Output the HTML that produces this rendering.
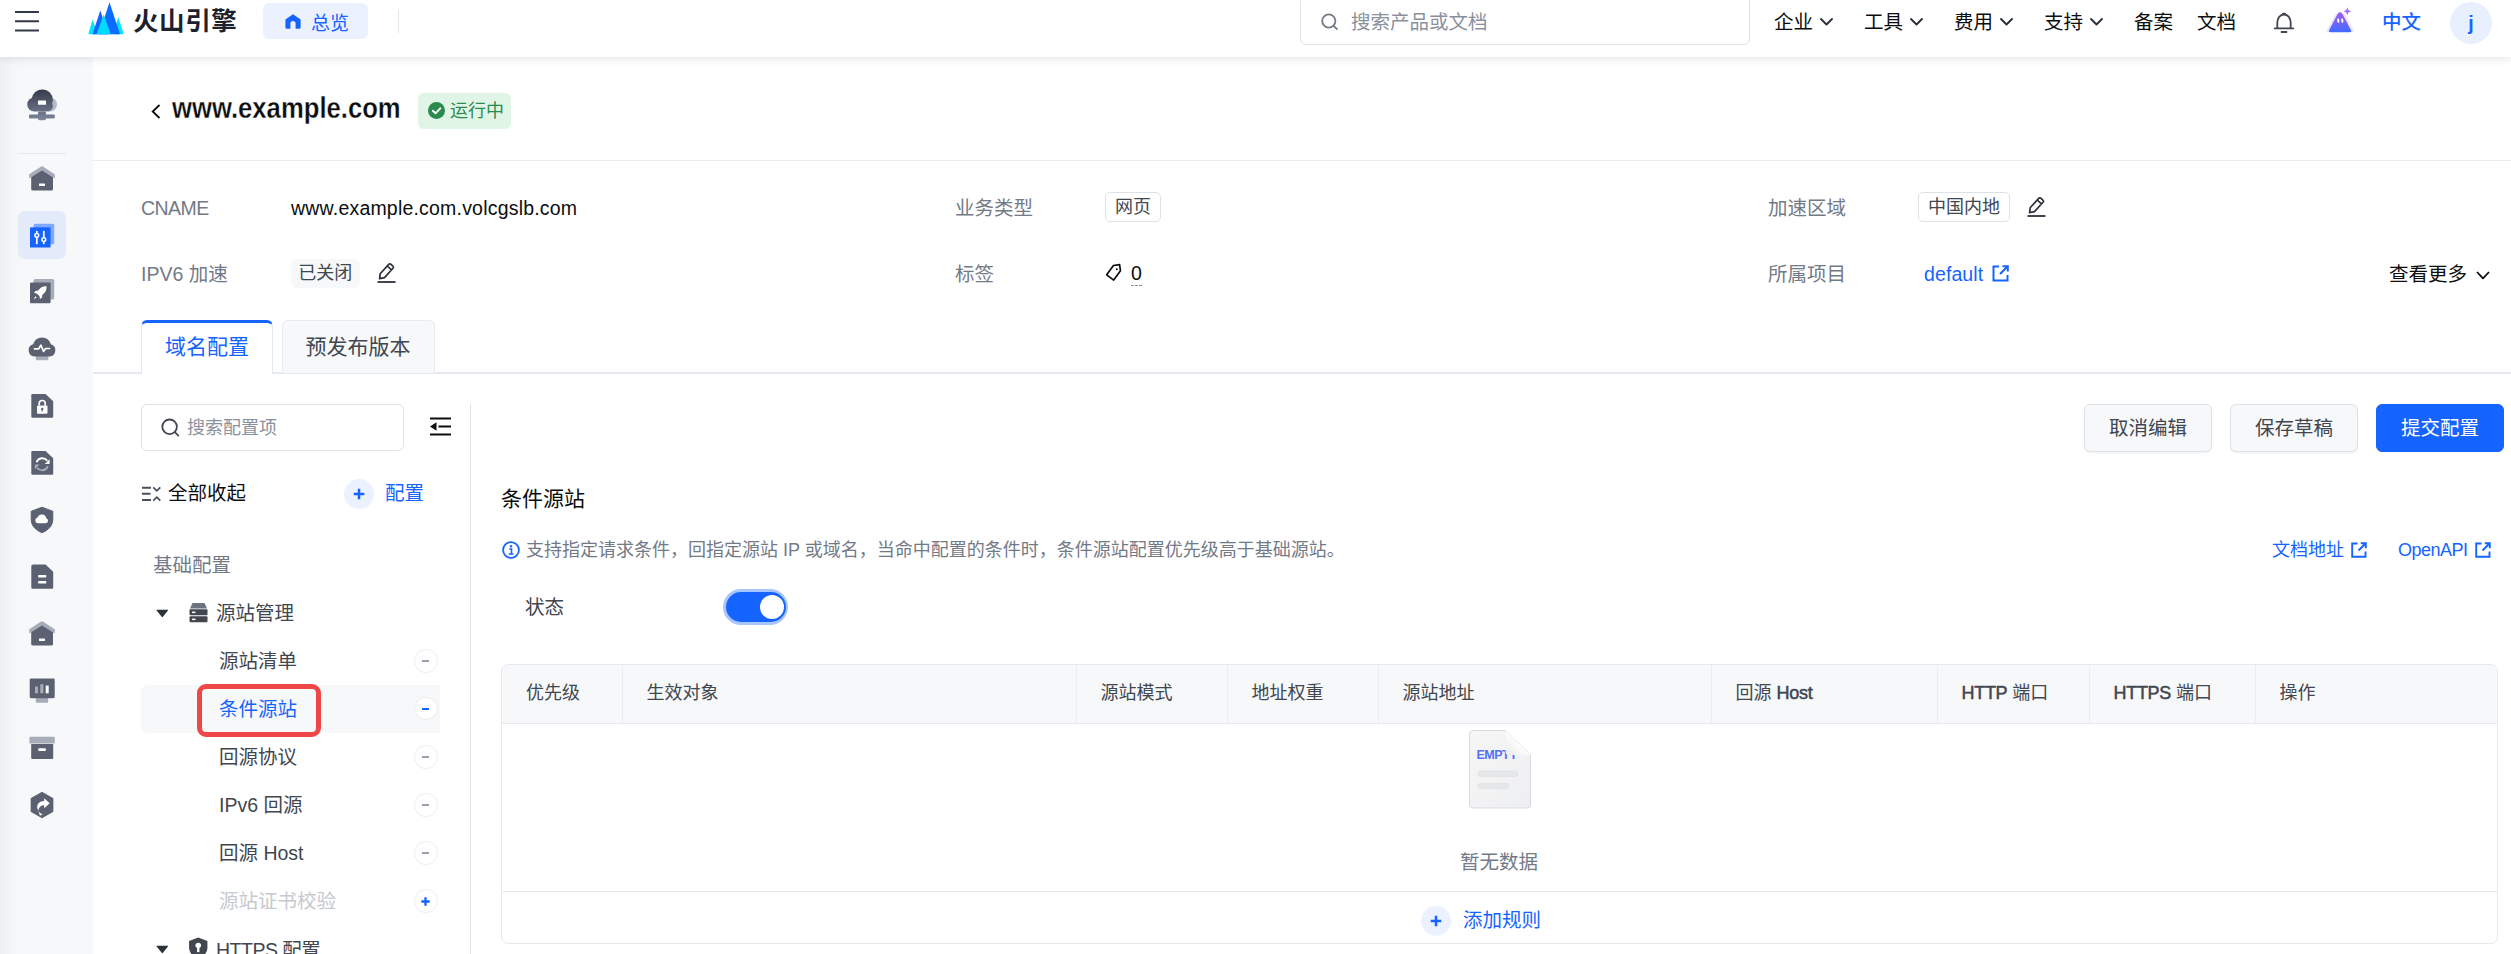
<!DOCTYPE html>
<html lang="zh-CN">
<head>
<meta charset="utf-8">
<title>条件源站 - 火山引擎</title>
<style>
*{box-sizing:border-box;margin:0;padding:0}
html,body{width:2511px;height:954px;overflow:hidden;background:#fff}
body{position:relative;font-family:"Liberation Sans","Noto Sans CJK SC",sans-serif;font-size:19.5px;color:#0c0d0e;line-height:1}
.abs{position:absolute;white-space:nowrap}
.t{position:absolute;white-space:nowrap;line-height:30px;height:30px}
.g{color:#737a87}
.b{color:#1664ff}
.d{color:#41464f}
svg{position:absolute;overflow:visible}
/* header */
#hdr{position:absolute;left:0;top:0;width:2511px;height:57px;background:#fff;box-shadow:0 2px 8px rgba(0,0,0,.10);z-index:10}
#side{position:absolute;left:0;top:57px;width:93px;height:897px;background:linear-gradient(90deg,#eceff3 0,#f4f6f8 12px,#f6f8fa 24px)}
.tag{position:absolute;height:30px;line-height:28px;font-size:18px;border:1px solid #dde2e9;border-radius:5px;padding:0 9px;color:#41464f;background:#fff;white-space:nowrap}
.btn{position:absolute;top:404px;height:48px;width:128px;border-radius:6px;font-size:19.5px;line-height:46px;text-align:center;border:1px solid #dde2e9;background:#f6f8fa;color:#41464f;box-shadow:0 1px 2px rgba(0,0,0,.06)}
.circ{position:absolute;width:23.500px;height:23.500px;border-radius:50%;border:1.700px solid #e9ecf1;background:#fff}
.circ i{position:absolute;left:7px;top:9.5px;width:7px;height:1.5px;background:#9aa1ad}
.th{position:absolute;top:0;height:57.500px;line-height:57px;font-size:18px;color:#41464f;padding-left:24px;border-left:1px solid #eaedf1;white-space:nowrap}
.lb{-webkit-text-stroke:.5px #41464f;letter-spacing:-.3px}
</style>
</head>
<body>
<div id="side" style="top:0;height:954px"><svg style="left:27px;top:89.5px" width="30" height="30" viewBox="0 0 30 30"><defs><linearGradient id="cg" gradientUnits="userSpaceOnUse" x1="0" y1="0" x2="0" y2="30"><stop offset="0" stop-color="#363c4d"/><stop offset="1" stop-color="#7d859a"/></linearGradient></defs>
<circle cx="23" cy="14.500" r="7" fill="#b3b9c8"/>
<circle cx="15.300" cy="10" r="10.600" fill="url(#cg)"/><circle cx="7.300" cy="14.500" r="7.100" fill="url(#cg)"/><rect x="4" y="11" width="21.800" height="10.600" rx="6" fill="url(#cg)"/>
<rect x="11" y="10.500" width="8" height="4.200" rx=".5" fill="#fff"/>
<rect x="11" y="21.400" width="8" height="8.800" rx="1.600" fill="url(#cg)"/><rect x="2" y="24.400" width="25.800" height="4" rx="1.200" fill="url(#cg)"/></svg>
<svg style="left:27px;top:163.5px" width="30" height="30" viewBox="0 0 30 30"><path d="M4.200 11.500 15 5.500l11 6V25a1.600 1.600 0 0 1-1.600 1.600H5.800A1.600 1.600 0 0 1 4.200 25Z" fill="#5b6171"/>
<path d="M2.200 10.300 14.200 2.400a1.500 1.500 0 0 1 1.600 0L27.800 10.300v4.200L15 6.600 2.200 14.500Z" fill="#a7adb8"/>
<rect x="12" y="19.500" width="6" height="2.600" rx=".5" fill="#fff"/></svg>
<div class="abs" style="left:18px;top:211px;width:48px;height:48px;border-radius:7px;background:#e3ebfb"></div>
<svg style="left:27px;top:220.5px" width="30" height="30" viewBox="0 0 30 30"><rect x="6.600" y="2.800" width="20.600" height="20.400" rx="1.500" fill="#7fa8ff"/>
<rect x="3" y="6.200" width="20.600" height="20.400" rx="1.200" fill="#1664ff"/>
<path d="M9.800 10.500v12M16.800 10.500v12" stroke="#fff" stroke-width="1.700" stroke-linecap="round"/>
<circle cx="9.800" cy="14.300" r="1.900" fill="#1664ff" stroke="#fff" stroke-width="1.500"/><circle cx="16.800" cy="18.600" r="1.900" fill="#1664ff" stroke="#fff" stroke-width="1.500"/></svg>
<svg style="left:27px;top:276.8px" width="30" height="30" viewBox="0 0 30 30"><rect x="6.600" y="2" width="20.600" height="20.400" rx="1.500" fill="#a7adb8"/>
<rect x="3" y="5.600" width="20.600" height="20.600" rx="1.200" fill="#5b6171"/>
<path d="M19.500 9.300c-3.500-.2-6.300 1.300-8.300 4.300l-2.800.4-1.300 2 2.700.5 2.700 2.700.5 2.700 2-1.300.4-2.800c3-2 4.400-4.800 4.100-8.500ZM8.300 19.200l-1.600 3 3-1.600Z" fill="#fff"/></svg>
<svg style="left:27px;top:333.8px" width="30" height="30" viewBox="0 0 30 30"><rect x="8.800" y="21" width="12.600" height="5.200" rx="1" fill="#a7adb8"/>
<path d="M7.500 22.600a6.300 6.300 0 0 1-1.400-12.300 9.200 9.200 0 0 1 17.800 0 6.300 6.300 0 0 1-1.400 12.300Z" fill="#5b6171"/>
<path d="M7.500 14.800h4.200l2.200-3.600 2.600 6.200 2-2.900h4" fill="none" stroke="#fff" stroke-width="1.700" stroke-linejoin="round" stroke-linecap="round"/></svg>
<svg style="left:27px;top:390.8px" width="30" height="30" viewBox="0 0 30 30"><path d="M5.600 3H18.500l7.700 7.300V25.400a1.300 1.300 0 0 1-1.300 1.300H5.600a1.300 1.300 0 0 1-1.300-1.300V4.300A1.300 1.300 0 0 1 5.600 3Z" fill="#5b6171"/><rect x="10" y="14.500" width="10.500" height="8.200" rx="1" fill="#fff"/><path d="M12.200 14.500v-2a3 3 0 0 1 6 0v2" fill="none" stroke="#fff" stroke-width="1.700"/><circle cx="15.200" cy="18" r="1.200" fill="#5b6171"/><rect x="14.700" y="18" width="1" height="2.600" fill="#5b6171"/></svg>
<svg style="left:27px;top:447.8px" width="30" height="30" viewBox="0 0 30 30"><path d="M5.600 3H18.500l7.700 7.300V25.400a1.300 1.300 0 0 1-1.300 1.300H5.600a1.300 1.300 0 0 1-1.300-1.300V4.300A1.300 1.300 0 0 1 5.600 3Z" fill="#5b6171"/><path d="M9.600 14.300a6 6 0 0 1 10.600-1.500" fill="none" stroke="#fff" stroke-width="1.900"/><path d="M22.600 11.300v4.800h-4.800Z" fill="#fff"/>
<path d="M20.800 18.300a6 6 0 0 1-10.600 1.500" fill="none" stroke="#a7adb8" stroke-width="1.900"/><path d="M7.800 21.300v-4.800h4.800Z" fill="#a7adb8"/></svg>
<svg style="left:27px;top:504.8px" width="30" height="30" viewBox="0 0 30 30"><path d="M15 2.200 25.800 6.300V14.500c0 6-4.300 10.600-10.800 13.200C8.500 25.100 4.200 20.500 4.200 14.500V6.300Z" fill="#5b6171" stroke="#5b6171" stroke-width="1" stroke-linejoin="round"/>
<path d="M10.800 18.200a2.900 2.900 0 0 1-.3-5.700 4.500 4.500 0 0 1 8.700.8 2.500 2.500 0 0 1-.4 4.900Z" fill="#fff"/></svg>
<svg style="left:27px;top:561.8px" width="30" height="30" viewBox="0 0 30 30"><path d="M5.600 2.500H18.500l7.700 7.300V25.400a1.300 1.300 0 0 1-1.300 1.300H5.600a1.300 1.300 0 0 1-1.300-1.300V4.300A1.300 1.300 0 0 1 5.600 3Z" fill="#5b6171"/><rect x="11.200" y="13" width="8" height="2.600" rx=".4" fill="#fff"/><rect x="11.200" y="19" width="8" height="2.600" rx=".4" fill="#fff"/></svg>
<svg style="left:27px;top:618.8px" width="30" height="30" viewBox="0 0 30 30"><path d="M4.200 11.500 15 5.500l11 6V25a1.600 1.600 0 0 1-1.600 1.600H5.800A1.600 1.600 0 0 1 4.200 25Z" fill="#5b6171"/>
<path d="M2.200 10.300 14.200 2.400a1.500 1.500 0 0 1 1.600 0L27.800 10.300v4.200L15 6.600 2.200 14.500Z" fill="#a7adb8"/>
<rect x="12" y="19.500" width="6" height="2.600" rx=".5" fill="#fff"/></svg>
<svg style="left:27px;top:675.8px" width="30" height="30" viewBox="0 0 30 30"><rect x="8.800" y="22" width="12.400" height="4.800" rx="1" fill="#a7adb8"/><rect x="2.700" y="2.400" width="25" height="19.800" rx="1.400" fill="#5b6171"/>
<rect x="8" y="10.500" width="3" height="6.800" fill="#a7adb8"/><rect x="13.300" y="8.200" width="3" height="9.100" fill="#a7adb8"/><rect x="18.700" y="9.600" width="3" height="7.700" fill="#fff"/></svg>
<svg style="left:27px;top:732.8px" width="30" height="30" viewBox="0 0 30 30"><rect x="2.400" y="3.800" width="25.400" height="6.800" rx="1.200" fill="#a7adb8"/><path d="M4.200 11h22V24.700a1.300 1.300 0 0 1-1.300 1.300H5.500a1.300 1.300 0 0 1-1.300-1.300Z" fill="#5b6171"/><rect x="11.300" y="15.300" width="7.500" height="2.600" rx=".4" fill="#fff"/></svg>
<svg style="left:27px;top:789.8px" width="30" height="30" viewBox="0 0 30 30"><path d="M15 2.600 25.600 8.700V21.300L15 27.400 4.400 21.300V8.700Z" fill="#5b6171" stroke="#5b6171" stroke-width="1.500" stroke-linejoin="round"/>
<path d="M17.200 8.300 22.700 13.300 17.200 18.300V15.200c-3.500 0-5.500 2-6 5.500-2.800-5.500.5-9.500 6-9.600Z" fill="#fff"/><path d="M11.200 20.700 13 25.800l3-1.700c-2.200-.3-3.800-1.500-4.800-3.400Z" fill="#fff"/></svg>
<div class="abs" style="left:18px;top:153px;width:48px;height:1px;background:#e3e6eb"></div>
</div>
<div id="hdr">
<svg style="left:15px;top:11px" width="24" height="21" viewBox="0 0 24 21"><path d="M0 1h24M0 10.3h24M0 19.5h24" stroke="#333a47" stroke-width="2" fill="none"/></svg>
<svg style="left:88px;top:2px" width="36" height="33" viewBox="88 2 36 33">
<polygon points="88.3,34.3 92.6,19.5 97.5,34.3" fill="#00e5ff"/>
<polygon points="113.5,34.3 118.2,17 123.8,34.3" fill="#00e5ff"/>
<polygon points="92.5,34.3 100.3,10.5 108,34.3" fill="#1664ff"/>
<polygon points="99,34.3 109.5,2.3 120,34.3" fill="#0a6cff"/>
<polygon points="96.5,34.3 103.7,14.5 110.6,34.3" fill="#00dcff"/>
</svg>
<div class="abs" style="left:133px;top:4.500px;font-size:25.500px;line-height:32px;font-weight:700;color:#1c222e;letter-spacing:.6px">火山引擎</div>
<div class="abs" style="left:263px;top:3px;width:105px;height:36px;border-radius:6px;background:#ebf1ff"></div>
<svg style="left:285px;top:14px" width="16" height="15" viewBox="0 0 16 15"><path d="M8 0.2 15.6 5.6V13.2a1.5 1.5 0 0 1-1.5 1.5H10.6V9.6a2.6 2.6 0 0 0-5.2 0v5.1H1.9A1.5 1.5 0 0 1 .4 13.2V5.6Z" fill="#1664ff"/></svg>
<div class="t b" style="left:311px;top:8.500px;font-size:19px">总览</div>
<div class="abs" style="left:398px;top:9px;width:1px;height:24px;background:#e3e6eb"></div>
<div class="abs" style="left:1300px;top:-4px;width:450px;height:49px;border:1px solid #dde2e9;border-radius:6px;background:#fff"></div>
<svg style="left:1321px;top:13px" width="18" height="18" viewBox="0 0 18 18"><circle cx="7.8" cy="8" r="6.6" fill="none" stroke="#737a87" stroke-width="1.8"/><path d="M12.6 12.8 16 16.2" stroke="#737a87" stroke-width="1.8" stroke-linecap="round"/></svg>
<div class="t" style="left:1351px;top:7px;color:#8a919e">搜索产品或文档</div>
<div class="t" style="left:1774px;top:7px;color:#0c0d0e">企业</div>
<svg style="left:1820px;top:18px" width="13" height="8" viewBox="0 0 13 8"><path d="M1 1l5.5 5.5L12 1" fill="none" stroke="#2b303b" stroke-width="1.9" stroke-linecap="round" stroke-linejoin="round"/></svg>
<div class="t" style="left:1864px;top:7px;color:#0c0d0e">工具</div>
<svg style="left:1910px;top:18px" width="13" height="8" viewBox="0 0 13 8"><path d="M1 1l5.5 5.5L12 1" fill="none" stroke="#2b303b" stroke-width="1.9" stroke-linecap="round" stroke-linejoin="round"/></svg>
<div class="t" style="left:1954px;top:7px;color:#0c0d0e">费用</div>
<svg style="left:2000px;top:18px" width="13" height="8" viewBox="0 0 13 8"><path d="M1 1l5.5 5.5L12 1" fill="none" stroke="#2b303b" stroke-width="1.9" stroke-linecap="round" stroke-linejoin="round"/></svg>
<div class="t" style="left:2044px;top:7px;color:#0c0d0e">支持</div>
<svg style="left:2090px;top:18px" width="13" height="8" viewBox="0 0 13 8"><path d="M1 1l5.5 5.5L12 1" fill="none" stroke="#2b303b" stroke-width="1.9" stroke-linecap="round" stroke-linejoin="round"/></svg>
<div class="t" style="left:2134px;top:7px;color:#0c0d0e">备案</div>
<div class="t" style="left:2197px;top:7px;color:#0c0d0e">文档</div>

<svg style="left:2273px;top:12px" width="22" height="22" viewBox="0 0 22 22"><path d="M4.300 16.200V10.800c0-4.800 2.800-8.300 6.700-8.300s6.700 3.500 6.700 8.300v5.400M1.800 16.400h18.400M8.500 20h5M10 1.600h2" fill="none" stroke="#41464f" stroke-width="1.800" stroke-linecap="round" stroke-linejoin="round"/></svg>
<svg style="left:2326px;top:8px" width="29" height="25" viewBox="0 0 29 25">
<defs><linearGradient id="pg" x1="0" y1="0" x2="0" y2="1"><stop offset="0" stop-color="#a55df3"/><stop offset="1" stop-color="#3f6bff"/></linearGradient></defs>
<path d="M.8 22.300 9 7.500c1.200-2.200 3.600-2.200 4.800 0l8 14.800c.4.800 0 1.700-1 1.700H1.700c-1 0-1.400-.9-.9-1.700Z" fill="#dcd3ff" opacity=".7"/>
<path d="M7 22.300 15.200 7.500c1.200-2.200 3.600-2.200 4.800 0l8 14.800c.4.800 0 1.700-1 1.700H7.900c-1 0-1.400-.9-.9-1.700Z" fill="#f3d9f5" opacity=".7"/>
<path d="M3.200 22.200 11.600 6c1.200-2.300 3.700-2.300 4.900 0l8.600 16.200c.5 1 0 2-1.100 2H4.300c-1.100 0-1.600-1-1.100-2Z" fill="url(#pg)"/>
<rect x="11.200" y="10.500" width="2" height="4.200" rx="1" fill="#fff" transform="rotate(-8 12 12)"/><rect x="15.200" y="10.500" width="2" height="4.200" rx="1" fill="#fff" transform="rotate(-8 16 12)"/>
<path d="M21.300 -.7l1.100 2.900 2.900 1.100-2.900 1.100-1.100 2.900-1.100-2.900-2.900-1.100 2.900-1.100Z" fill="#a56dff"/>
</svg>
<div class="t b" style="left:2382px;top:7px;font-weight:500">中文</div>
<div class="abs" style="left:2450px;top:2px;width:42px;height:42px;border-radius:50%;background:#e8f0ff;color:#1664ff;font-weight:700;font-size:19.500px;line-height:43px;text-align:center">j</div>
</div>
<div id="main">
<!--INFO-->
<svg style="left:151px;top:104px" width="10" height="15" viewBox="0 0 10 15"><path d="M8.500 1 1.700 7.500 8.500 14" fill="none" stroke="#0c0d0e" stroke-width="1.800"/></svg>
<div class="abs" id="ttl" style="left:172px;top:88px;line-height:40px;font-size:29px;font-weight:700;color:#0c0d0e;-webkit-text-stroke:.3px #fff;transform:scaleX(.885);transform-origin:0 0">www.example.com</div>
<div class="abs" style="left:418px;top:93px;width:93px;height:36px;border-radius:6px;background:#e1f5e6"></div>
<svg style="left:428px;top:102px" width="17" height="17" viewBox="0 0 17 17"><circle cx="8.500" cy="8.500" r="8.500" fill="#2a8a4e"/><path d="M4.800 8.700 7.500 11.300 12.300 6.300" fill="none" stroke="#fff" stroke-width="1.900" stroke-linecap="round" stroke-linejoin="round"/></svg>
<div class="t " style="left:450px;top:95.5px;font-size:18px;color:#2b8a4f">运行中</div>
<div class="abs" style="left:93px;top:160px;width:2418px;height:1px;background:#e8ebf1"></div>
<div class="t g" style="left:141px;top:193px;letter-spacing:-.55px">CNAME</div>
<div class="t " style="left:291px;top:193px;letter-spacing:.2px">www.example.com.volcgslb.com</div>
<div class="t g" style="left:141px;top:258.5px;">IPV6 加速</div>
<div class="tag" style="left:291px;top:258.500px;height:29px;line-height:29px;border:none;background:#f6f8fa;border-radius:6px;padding:0 7.300px">已关闭</div>
<svg style="left:377px;top:262px" width="19" height="21" viewBox="0 0 19 21"><path d="M3.200 11.800 11.700 2.400a1.600 1.600 0 0 1 2.300-.100l1.900 1.800a1.600 1.600 0 0 1 .100 2.200L7.500 15.600 2.600 16.700ZM10.300 4 14.400 7.800" fill="none" stroke="#2b303b" stroke-width="1.700" stroke-linejoin="round"/><path d="M.500 20h18" stroke="#2b303b" stroke-width="1.800"/></svg>
<div class="t g" style="left:955px;top:192.5px;">业务类型</div>
<div class="tag" style="left:1105px;top:192px;">网页</div>
<div class="t g" style="left:955px;top:258.5px;">标签</div>
<svg style="left:1105px;top:264px" width="18" height="18" viewBox="0 0 18 18"><path d="M9.500 1.500h6.200v6.200l-8 8.300L1.500 9.800Z" fill="none" stroke="#0c0d0e" stroke-width="1.700" stroke-linejoin="round" transform="rotate(-8 9 9)"/><circle cx="11.800" cy="5.300" r="1" fill="#0c0d0e"/></svg>
<div class="t " style="left:1131px;top:258.5px;border-bottom:1.500px dashed #8a919e;height:27.500px;line-height:28px">0</div>
<div class="t g" style="left:1768px;top:192.5px;">加速区域</div>
<div class="tag" style="left:1918px;top:192px;padding:0 9px">中国内地</div>
<svg style="left:2027px;top:196px" width="19" height="21" viewBox="0 0 19 21"><path d="M3.200 11.800 11.700 2.400a1.600 1.600 0 0 1 2.300-.100l1.900 1.800a1.600 1.600 0 0 1 .100 2.200L7.500 15.600 2.600 16.700ZM10.300 4 14.400 7.800" fill="none" stroke="#2b303b" stroke-width="1.700" stroke-linejoin="round"/><path d="M.500 20h18" stroke="#2b303b" stroke-width="1.800"/></svg>
<div class="t g" style="left:1768px;top:258.5px;">所属项目</div>
<div class="t b" style="left:1924px;top:258.5px;letter-spacing:.1px">default</div>
<svg style="left:1992px;top:265px" width="17" height="17" viewBox="0 0 17 17"><path d="M7 1.500H1.500v14h14V10M10.500 1.200h5.300v5.300M15.500 1.500 8 9" fill="none" stroke="#1664ff" stroke-width="2" stroke-linejoin="miter"/></svg>
<div class="t " style="left:2389px;top:258.5px;">查看更多</div>
<svg style="left:2476px;top:271px" width="14" height="9" viewBox="0 0 14 9"><path d="M1 1l6 6.300L13 1" fill="none" stroke="#0c0d0e" stroke-width="1.800" stroke-linejoin="round"/></svg>
<div class="abs" style="left:93px;top:372px;width:2418px;height:2px;background:#e6e9f0"></div>
<div class="abs" style="left:141px;top:320px;width:132px;height:54px;background:#fff;border:1.500px solid #e3e7ee;border-bottom:none;border-top:3px solid #1664ff;border-radius:6px 6px 0 0"></div>
<div class="abs" style="left:282px;top:320px;width:153px;height:52.500px;background:#f6f8fa;border:1.500px solid #e8ebf0;border-bottom:none;border-radius:6px 6px 0 0"></div>
<div class="t b" style="left:165px;top:332px;font-size:21px;">域名配置</div>
<div class="t d" style="left:305.5px;top:332px;font-size:21px;">预发布版本</div>
<!--/INFO-->
<!--LEFT-->
<div class="abs" style="left:141px;top:404px;width:263px;height:47px;border:1.500px solid #dde2e9;border-radius:6px;background:#fff"></div>
<svg style="left:161px;top:418px" width="19" height="19" viewBox="0 0 19 19"><circle cx="8.600" cy="8.800" r="7.300" fill="none" stroke="#41464f" stroke-width="1.800"/><path d="M13.800 14.200 17.300 17.700" stroke="#41464f" stroke-width="1.800" stroke-linecap="round"/></svg>
<div class="t " style="left:187px;top:412.5px;font-size:18px;color:#8a919e">搜索配置项</div>
<svg style="left:429.500px;top:417px" width="21" height="19" viewBox="0 0 21 19"><path d="M0 1.500h21M8.500 9.500H21M0 17.500h21" stroke="#0c0d0e" stroke-width="2.200" fill="none"/><path d="M0 9.500 6.500 5.300v8.400Z" fill="#0c0d0e"/></svg>
<div class="abs" style="left:469.500px;top:404px;width:1.500px;height:550px;background:#dfe3ea"></div>
<svg style="left:141.500px;top:486px" width="20" height="16" viewBox="0 0 20 16"><path d="M0 1.800h9M0 7.800h8.500M0 14h9" stroke="#4b515c" stroke-width="2" fill="none"/><path d="M11.300 1.300 14.800 4.800 18.300 1.300M11.300 14.700 14.800 11.200 18.300 14.700" stroke="#4b515c" stroke-width="1.800" fill="none"/></svg>
<div class="t " style="left:168px;top:477.5px;">全部收起</div>
<div class="abs" style="left:344px;top:478.500px;width:30px;height:30px;border-radius:50%;background:#ebf1ff"></div>
<svg style="left:353px;top:487.500px" width="12" height="12" viewBox="0 0 12 12"><path d="M6 .7v10.600M.7 6h10.600" stroke="#1664ff" stroke-width="2.500" fill="none"/></svg>
<div class="t b" style="left:385px;top:477.5px;">配置</div>
<div class="t g" style="left:153px;top:550px;">基础配置</div>
<svg style="left:156px;top:609px" width="13" height="9" viewBox="0 0 13 9"><path d="M1 .8h10.600a.5.500 0 0 1 .4.800L6.700 8.100a.5.500 0 0 1-.8 0L.6 1.600A.5.500 0 0 1 1 .8Z" fill="#2b303b"/></svg>
<svg style="left:189px;top:602.500px" width="19" height="20" viewBox="0 0 19 20"><path d="M3.500 0h12L18 5.500H1Z" fill="#6b7280"/><rect x=".5" y="6.300" width="18" height="6" rx="1" fill="#41464f"/><rect x=".5" y="13.300" width="18" height="6" rx="1" fill="#41464f"/><rect x="3" y="8.600" width="3.500" height="1.500" fill="#fff"/><rect x="3" y="15.600" width="3.500" height="1.500" fill="#fff"/></svg>
<div class="t d" style="left:216px;top:598px;">源站管理</div>
<div class="t d" style="left:219px;top:646px;">源站清单</div>
<div class="circ" style="left:414px;top:649px"></div>
<div class="abs" style="left:421.800px;top:660.2px;width:7.500px;height:1.600px;background:#9aa1ad"></div>
<div class="abs" style="left:141px;top:685px;width:299px;height:48px;background:#f6f8fa;border-radius:6px 0 0 6px"></div>
<div class="t b" style="left:219px;top:693.5px;">条件源站</div>
<div class="circ" style="left:414px;top:696.5px"></div>
<div class="abs" style="left:421.800px;top:707.5px;width:7.500px;height:2px;background:#1664ff"></div>
<div class="abs" style="left:196.500px;top:684px;width:124.500px;height:52.500px;border:5px solid #ef4646;border-radius:9px"></div>
<div class="t d" style="left:219px;top:742px;">回源协议</div>
<div class="circ" style="left:414px;top:745px"></div>
<div class="abs" style="left:421.800px;top:756.2px;width:7.500px;height:1.600px;background:#9aa1ad"></div>
<div class="t d" style="left:219px;top:790px;">IPv6 回源</div>
<div class="circ" style="left:414px;top:793px"></div>
<div class="abs" style="left:421.800px;top:804.2px;width:7.500px;height:1.600px;background:#9aa1ad"></div>
<div class="t d" style="left:219px;top:838px;">回源 Host</div>
<div class="circ" style="left:414px;top:841px"></div>
<div class="abs" style="left:421.800px;top:852.2px;width:7.500px;height:1.600px;background:#9aa1ad"></div>
<div class="t " style="left:219px;top:886px;color:#c6c9cf">源站证书校验</div>
<div class="circ" style="left:414px;top:889px"></div>
<svg style="left:421.300px;top:896.5px" width="9" height="9" viewBox="0 0 9 9"><path d="M4.500 .3v8.400M.3 4.500h8.400" stroke="#1664ff" stroke-width="2.300" fill="none"/></svg>
<svg style="left:156px;top:945px" width="13" height="9" viewBox="0 0 13 9"><path d="M1 .8h10.600a.5.500 0 0 1 .4.800L6.700 8.100a.5.500 0 0 1-.8 0L.6 1.600A.5.500 0 0 1 1 .8Z" fill="#2b303b"/></svg>
<svg style="left:187.800px;top:937px" width="20.500" height="23" viewBox="0 0 19 22" preserveAspectRatio="none"><path d="M9.500 .5 18 3.800V10c0 5-3.500 8.800-8.500 11C4.500 18.800 1 15 1 10V3.800Z" fill="#41464f"/><circle cx="9.500" cy="8" r="2.600" fill="#fff"/><rect x="8.400" y="9" width="2.200" height="5.500" fill="#fff"/></svg>
<div class="t d" style="left:216px;top:934.500px;letter-spacing:-.5px">HTTPS 配置</div>
<!--/LEFT-->
<!--RIGHT-->
<div class="btn" style="left:2084px">取消编辑</div>
<div class="btn" style="left:2230px">保存草稿</div>
<div class="btn" style="left:2376px;background:#1664ff;border-color:#1664ff;color:#fff;box-shadow:none">提交配置</div>
<div class="t " style="left:501px;top:484px;font-size:21px;">条件源站</div>
<svg style="left:502px;top:540.500px" width="18" height="18" viewBox="0 0 18 18"><circle cx="9" cy="9" r="7.900" fill="none" stroke="#1664ff" stroke-width="1.800"/><circle cx="9" cy="5.200" r="1.200" fill="#1664ff"/><path d="M7.300 8h2.200v4.800M6.800 13h4.600" stroke="#1664ff" stroke-width="1.600" fill="none"/></svg>
<div class="t g" style="left:526px;top:534.5px;font-size:18px;">支持指定请求条件，回指定源站 IP 或域名，当命中配置的条件时，条件源站配置优先级高于基础源站。</div>
<div class="t b" style="left:2272px;top:534.5px;font-size:18px;">文档地址</div>
<svg style="left:2351px;top:541.5px" width="16" height="16" viewBox="0 0 16 16"><path d="M6.500 1.500H1.200v13.300h13.300V9.500M9.800 1.200h5v5M14.500 1.500 7.500 8.500" fill="none" stroke="#1664ff" stroke-width="1.900" stroke-linejoin="miter"/></svg>
<div class="t b" style="left:2398px;top:534.5px;font-size:18px;letter-spacing:-.5px">OpenAPI</div>
<svg style="left:2475px;top:541.5px" width="16" height="16" viewBox="0 0 16 16"><path d="M6.500 1.500H1.200v13.300h13.300V9.500M9.800 1.200h5v5M14.500 1.500 7.500 8.500" fill="none" stroke="#1664ff" stroke-width="1.900" stroke-linejoin="miter"/></svg>
<div class="t d" style="left:525px;top:592px;">状态</div>
<div class="abs" style="left:723px;top:589px;width:65px;height:36px;border-radius:18px;background:#a9c5ff"></div>
<div class="abs" style="left:726px;top:592px;width:59.500px;height:30px;border-radius:15px;background:#1664ff"></div>
<div class="abs" style="left:759.500px;top:595px;width:24px;height:24px;border-radius:50%;background:#fff"></div>
<div class="abs" id="tbl" style="left:501px;top:664px;width:1997px;height:279.500px;border:1.500px solid #e6e9ef;border-radius:7px;background:#fff;overflow:hidden">
<div class="abs" style="left:0;top:0;width:1997px;height:59px;background:#f6f8fa;border-bottom:1.500px solid #e6e9ef"></div>
<div class="th" style="left:-1.5px;border-left:none;padding-left:25.500px">优先级</div>
<div class="th" style="left:119.5px;">生效对象</div>
<div class="th" style="left:573.5px;">源站模式</div>
<div class="th" style="left:724.5px;">地址权重</div>
<div class="th" style="left:875.5px;">源站地址</div>
<div class="th" style="left:1208.5px;">回源 <span class="lb">Host</span></div>
<div class="th" style="left:1434.5px;"><span class="lb">HTTP</span> 端口</div>
<div class="th" style="left:1586.5px;"><span class="lb">HTTPS</span> 端口</div>
<div class="th" style="left:1752.5px;">操作</div>
<div class="abs" style="left:0;top:225.500px;width:1997px;height:1.500px;background:#e6e9ef"></div>
</div>
<svg style="left:1468px;top:729px" width="64" height="81" viewBox="0 0 64 81">
<defs><linearGradient id="eg" x1="0" y1="0" x2="1" y2="1"><stop offset="0" stop-color="#f6f6f7"/><stop offset="1" stop-color="#eeeff0"/></linearGradient>
<linearGradient id="fg" x1="0" y1="1" x2="1" y2="0"><stop offset="0" stop-color="#e9eaec"/><stop offset=".45" stop-color="#fbfbfb"/><stop offset="1" stop-color="#fff"/></linearGradient></defs>
<path d="M5 1.500H37.500L62.500 26V75.500a3.500 3.500 0 0 1-3.500 3.500H5A3.500 3.500 0 0 1 1.500 75.500V5A3.500 3.500 0 0 1 5 1.500Z" fill="url(#eg)" stroke="#d8dadf" stroke-width="1"/>
<text x="8.500" y="30" font-family="Liberation Sans, sans-serif" font-weight="700" font-size="12.500" fill="#5471f5" textLength="41">EMPTY</text>
<path d="M37.500 1.500 62.500 26H41a3.500 3.500 0 0 1-3.500-3.500Z" fill="url(#fg)"/>
<rect x="10" y="42" width="40" height="5.500" rx="2.700" fill="#e6e7e9" stroke="#dcdde0" stroke-width=".6"/><rect x="10" y="54.500" width="31" height="5" rx="2.500" fill="#e6e7e9" stroke="#dcdde0" stroke-width=".6"/>
</svg>
<div class="t g" style="left:1460px;top:847px;">暂无数据</div>
<div class="abs" style="left:1421px;top:906px;width:30px;height:30px;border-radius:50%;background:#ebf1ff"></div>
<svg style="left:1430px;top:915px" width="12" height="12" viewBox="0 0 12 12"><path d="M6 .7v10.600M.7 6h10.600" stroke="#1664ff" stroke-width="2.500" fill="none"/></svg>
<div class="t b" style="left:1463px;top:904.5px;">添加规则</div>
<!--/RIGHT-->
</div>
</body>
</html>
